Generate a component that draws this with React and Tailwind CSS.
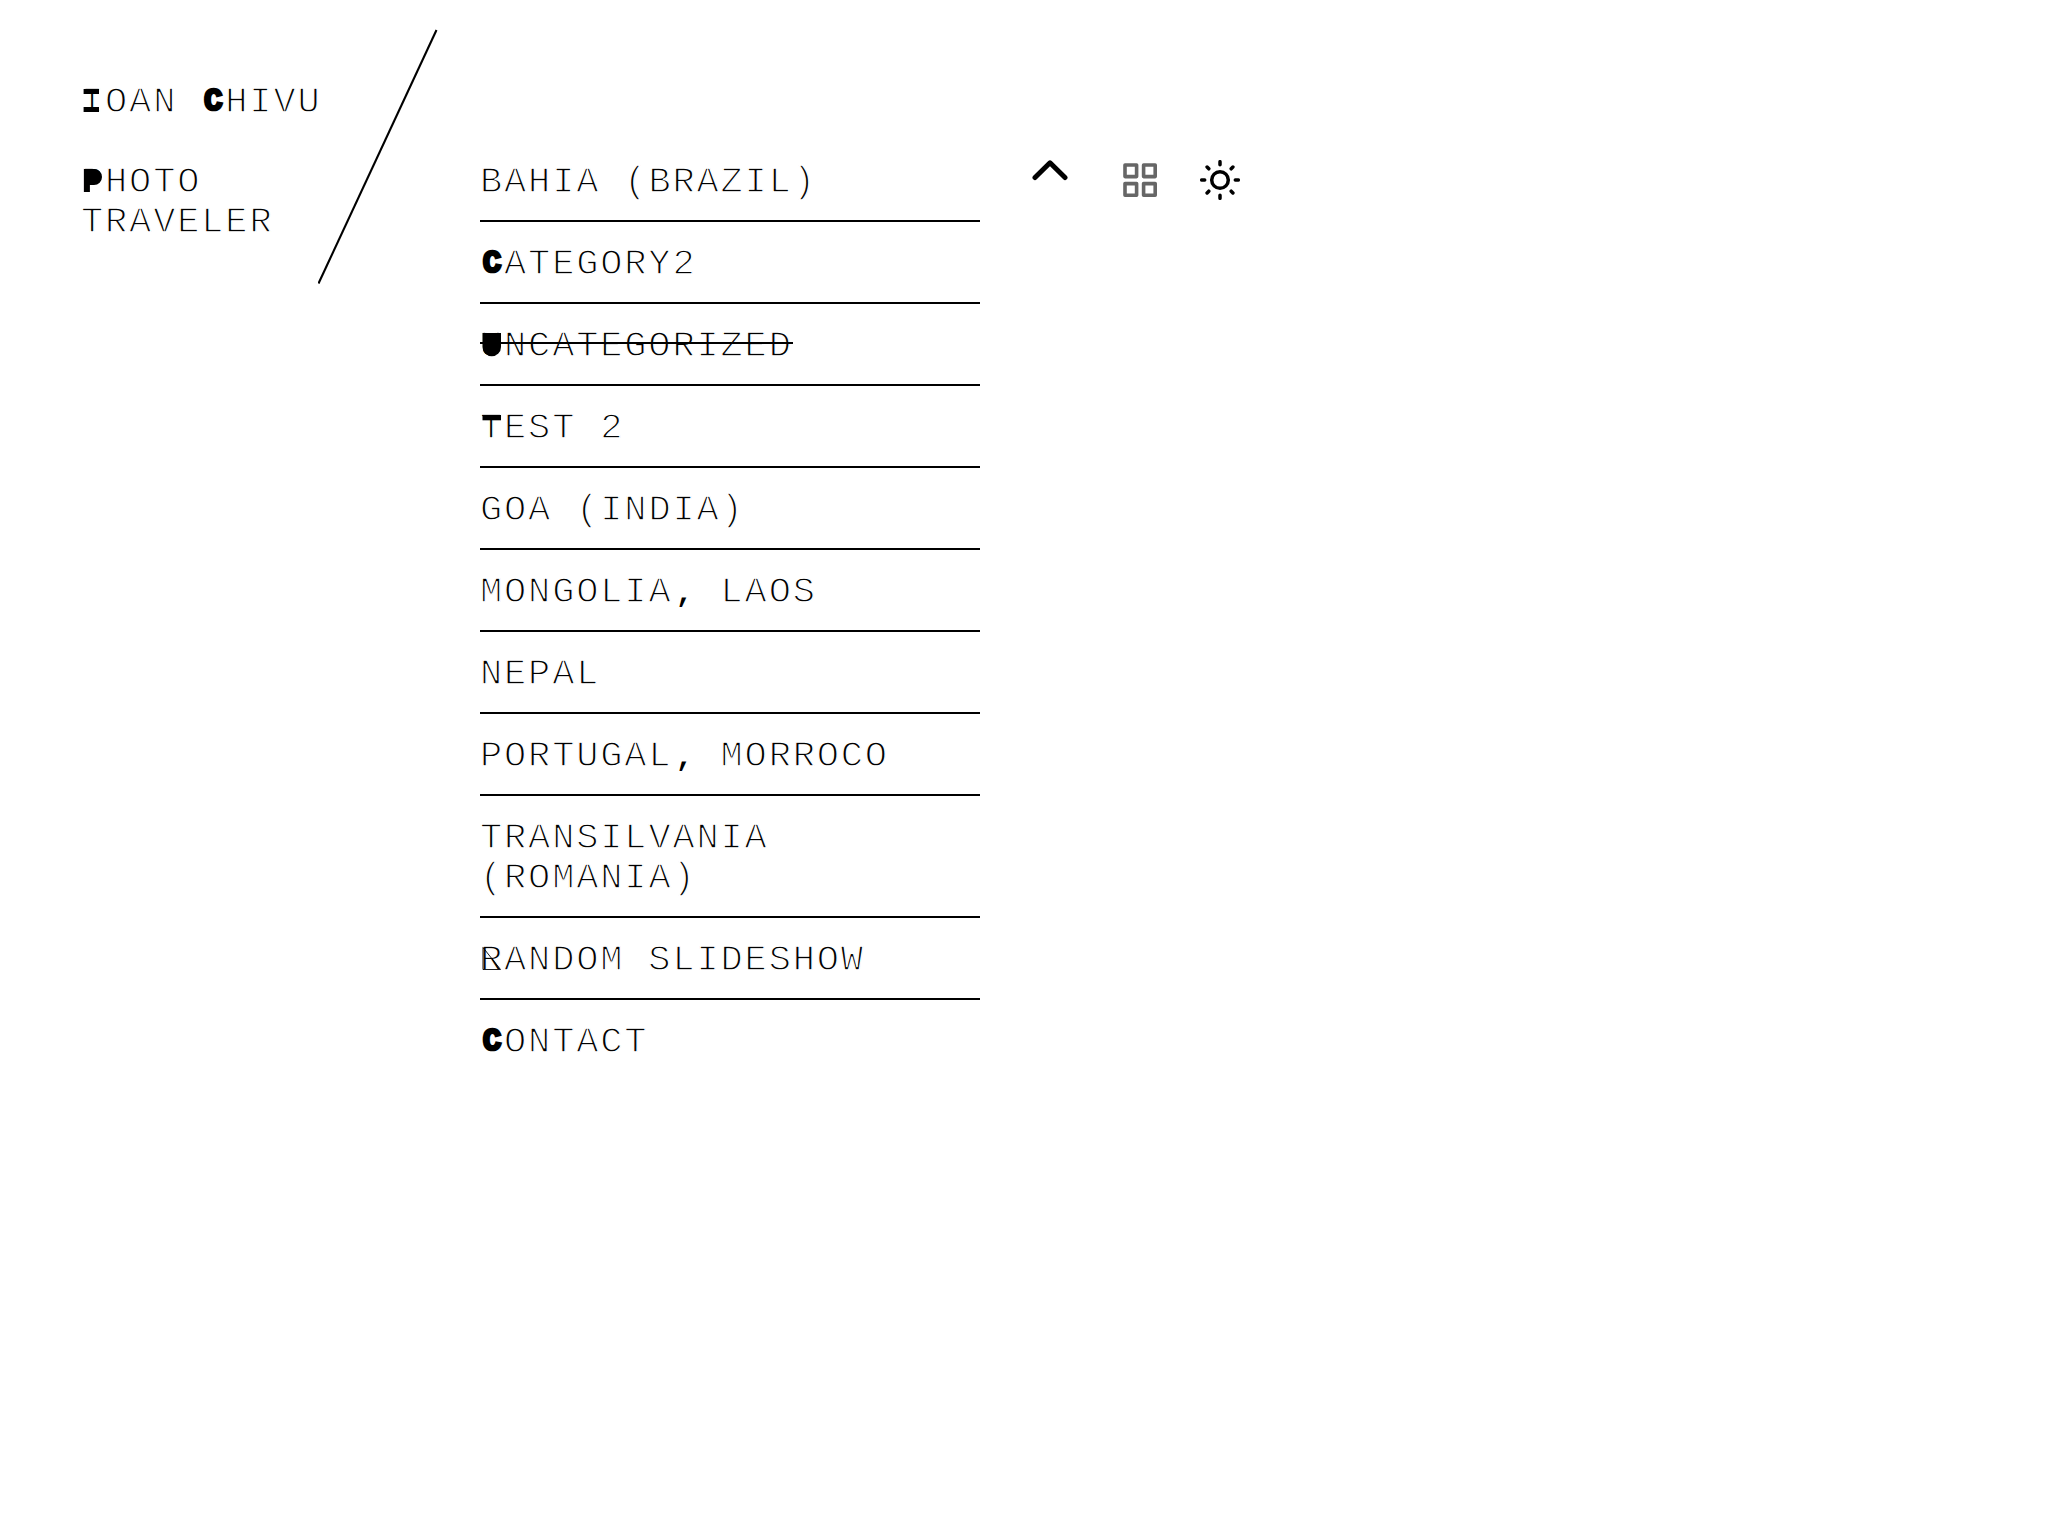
const thin = "[-webkit-text-stroke:1.3px_white]";

const cell = "relative inline-block h-10 w-[24.05px] align-top";

function Initial({ letter }) {
  if (letter === "C") {
    return (
      <span className={`${cell} text-center text-[31px] font-bold tracking-normal [-webkit-text-stroke:2.6px_black]`}>
        C
      </span>
    );
  }
  return (
    <span className={cell}>
      {letter}
      <svg className="absolute left-0 top-px h-10 w-6" fill="black">
        {letter === "I" && <path d="M2.6 6h15.4v5H2.6zM2.6 24h15.4v5H2.6z" />}
        {letter === "T" && <rect x="2.5" y="6" width="18.5" height="5.3" />}
        {letter === "P" && <path d="M2.9 6H13a8 8 0 0 1 0 16H8.9v7h-6z" />}
        {letter === "U" && <path d="M2.5 6H21v14a9.25 9.25 0 0 1-18.5 0z" />}
        {letter === "R" && <path d="M3 6.5L20.5 28.5H3V6.5" fill="none" stroke="black" strokeWidth="0.9" />}
      </svg>
    </span>
  );
}

function Label({ initial, text }) {
  const [head, tail] = text.split(",");
  return (
    <>
      {initial && <Initial letter={initial} />}
      {head}
      {tail && (
        <span className="inline-block w-[24.05px] text-center text-[29px] font-bold leading-none tracking-normal [-webkit-text-stroke:0px]">
          ,
        </span>
      )}
      {tail}
    </>
  );
}

const items = [
  { text: "BAHIA (BRAZIL)" },
  { initial: "C", text: "ATEGORY2" },
  { initial: "U", text: "NCATEGORIZED", active: true },
  { initial: "T", text: "EST 2" },
  { text: "GOA (INDIA)" },
  { text: "MONGOLIA, LAOS" },
  { text: "NEPAL" },
  { text: "PORTUGAL, MORROCO" },
  { text: "TRANSILVANIA (ROMANIA)" },
  { initial: "R", text: "ANDOM SLIDESHOW" },
  { initial: "C", text: "ONTACT" },
];

export default function App() {
  return (
    <div
      className={`flex h-[1536px] w-full items-start overflow-hidden bg-white pl-[81px] font-['Liberation_Mono',monospace] text-[37px] leading-10 tracking-[1.85px] text-black ${thin}`}
    >
      <header className="flex shrink-0">
        <div className="flex w-[237px] flex-col gap-10 pt-[82px]">
          <h1 className="whitespace-nowrap">
            <Label initial="I" text="OAN " />
            <Label initial="C" text="HIVU" />
          </h1>
          <p>
            <Label initial="P" text="HOTO" />
            <br />
            TRAVELER
          </p>
        </div>
        <svg className="mt-7 h-[258px] w-[120px]" fill="none" stroke="black" strokeWidth="2.1">
          <path d="M118.5 2L0.5 255.5" />
        </svg>
      </header>
      <main className="flex gap-[50px] pl-[42px] pt-[160px]">
        <ul className="flex w-[500px] flex-col gap-5">
          {items.map(({ initial, text, active }) => (
            <li key={text} className="border-b-2 border-black pb-[18px] pt-[2px] last:border-0">
              <a className="relative block w-fit">
                <Label initial={initial} text={text} />
                {active && <i className="absolute inset-x-0 top-4 h-[2px] bg-black" />}
              </a>
            </li>
          ))}
        </ul>
        <div className="flex gap-10">
          <svg className="mr-[10px] h-10 w-10" fill="none" stroke="black" strokeWidth="5" strokeLinecap="round" strokeLinejoin="round">
            <path d="M5 17.5L20 2.8L35 17.5" />
          </svg>
          <svg className="h-10 w-10" fill="none" stroke="#666" strokeWidth="3.6" strokeLinejoin="round">
            <path d="M5 5h11.6v11.6H5zM23.6 5h11.6v11.6H23.6zM5 23.6h11.6v11.6H5zM23.6 23.6h11.6v11.6H23.6z" />
          </svg>
          <svg className="h-10 w-10" fill="none" stroke="black" strokeWidth="3.5" strokeLinecap="round">
            <circle cx="20" cy="20" r="8.3" />
            <path d="M20 1.7v3M20 35.3v3M1.7 20h3M35.3 20h3M7.1 7.1l1.7 1.7M31.2 31.2l1.7 1.7M32.9 7.1l-1.7 1.7M8.8 31.2L7.1 32.9" />
          </svg>
        </div>
      </main>
    </div>
  );
}
